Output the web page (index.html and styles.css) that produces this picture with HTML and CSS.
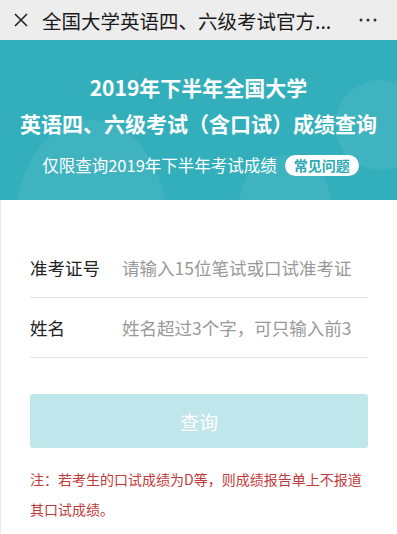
FILE: index.html
```html
<!DOCTYPE html>
<html lang="zh-CN">
<head>
    <meta charset="UTF-8">
    <meta name="viewport" content="width=device-width, initial-scale=1.0">
    <title>成绩查询</title>
    <link rel="stylesheet" href="styles.css">
</head>
<body>
    <div class="topbar">
        <span class="close">
            <svg width="14" height="14" viewBox="0 0 14 14"><path d="M1 1L13 13M13 1L1 13" stroke="#222" stroke-width="1.6"/></svg>
        </span>
        <span class="topbar-title">全国大学英语四、六级考试官方...</span>
        <span class="more">
            <svg width="18" height="4" viewBox="0 0 18 4"><circle cx="2" cy="2" r="1.5" fill="#333"/><circle cx="9" cy="2" r="1.5" fill="#333"/><circle cx="16" cy="2" r="1.5" fill="#333"/></svg>
        </span>
    </div>

    <div class="banner">
        <div class="bubble bubble-left"></div>
        <div class="bubble bubble-mid"></div>
        <div class="bubble bubble-right"></div>
        <h1>2019年下半年全国大学<br>英语四、六级考试（含口试）成绩查询</h1>
        <p class="sub">仅限查询2019年下半年考试成绩<span class="faq">常见问题</span></p>
    </div>

    <div class="content">
        <form class="query-form">
            <div class="form-row">
                <label for="zkz">准考证号</label>
                <input type="text" id="zkz" placeholder="请输入15位笔试或口试准考证号">
            </div>
            <div class="form-row">
                <label for="xm">姓名</label>
                <input type="text" id="xm" placeholder="姓名超过3个字，可只输入前3个">
            </div>
            <button type="button" class="btn-query">查询</button>
        </form>
        <p class="note">注：若考生的口试成绩为D等，则成绩报告单上不报道其口试成绩。</p>
    </div>
</body>
</html>
```

FILE: styles.css
```css
body {
    margin: 0;
    font-family: "Noto Sans CJK SC", "Noto Sans", sans-serif;
    background: #fff;
    width: 397px;
    height: 534px;
    overflow: hidden;
}

.topbar {
    height: 40px;
    background: #ededed;
    display: flex;
    align-items: center;
    padding: 0 14px;
    color: #1a1a1a;
}

.close {
    display: flex;
    width: 16px;
    margin-right: 12px;
}

.topbar-title {
    font-size: 19.5px;
    flex: 1;
    white-space: nowrap;
    overflow: hidden;
}

.more {
    display: flex;
    margin: 0 6px 0 20px;
}

.banner {
    position: relative;
    overflow: hidden;
    background: #33afbc;
    height: 160px;
    color: #fff;
    text-align: center;
    box-sizing: border-box;
    padding-top: 29px;
}

.bubble {
    position: absolute;
    border-radius: 50%;
    background: rgba(255, 255, 255, 0.06);
}

.bubble-left {
    width: 150px;
    height: 200px;
    left: 16px;
    top: 80px;
}

.bubble-mid {
    width: 90px;
    height: 90px;
    left: 240px;
    top: 115px;
}

.bubble-right {
    width: 90px;
    height: 90px;
    left: 335px;
    top: 40px;
}

.banner h1 {
    position: relative;
    margin: 0;
    font-size: 21px;
    font-weight: 700;
    line-height: 36px;
}

.sub {
    position: relative;
    margin: 13px 0 0;
    font-size: 16.5px;
    line-height: 22px;
    padding-left: 4px;
}

.faq {
    display: inline-block;
    background: #fff;
    color: #2ea8b5;
    font-size: 14px;
    font-weight: 700;
    line-height: 21px;
    padding: 0 9px;
    border-radius: 11px;
    margin-left: 8px;
    vertical-align: 1px;
}

.content {
    height: 334px;
    box-sizing: border-box;
    border-left: 1px solid #e8e8e8;
    padding: 38px 29px 0 29px;
}

.form-row {
    display: flex;
    align-items: center;
    height: 59px;
    border-bottom: 1px solid #e3e3e3;
}

label {
    width: 92px;
    font-size: 17.5px;
    color: #222;
}

input {
    flex: 1;
    min-width: 0;
    border: none;
    outline: none;
    font-family: inherit;
    font-size: 17.5px;
    padding: 0;
    margin-right: 17px;
    background: transparent;
}

input::placeholder {
    color: #999;
}

.btn-query {
    display: block;
    width: 100%;
    height: 54px;
    margin-top: 36px;
    background: #bfe6ea;
    color: #fff;
    border: none;
    border-radius: 3px;
    font-family: inherit;
    font-size: 19px;
}

.note {
    margin: 16px 0 0;
    font-size: 14px;
    line-height: 30px;
    color: #c2393b;
}
```
